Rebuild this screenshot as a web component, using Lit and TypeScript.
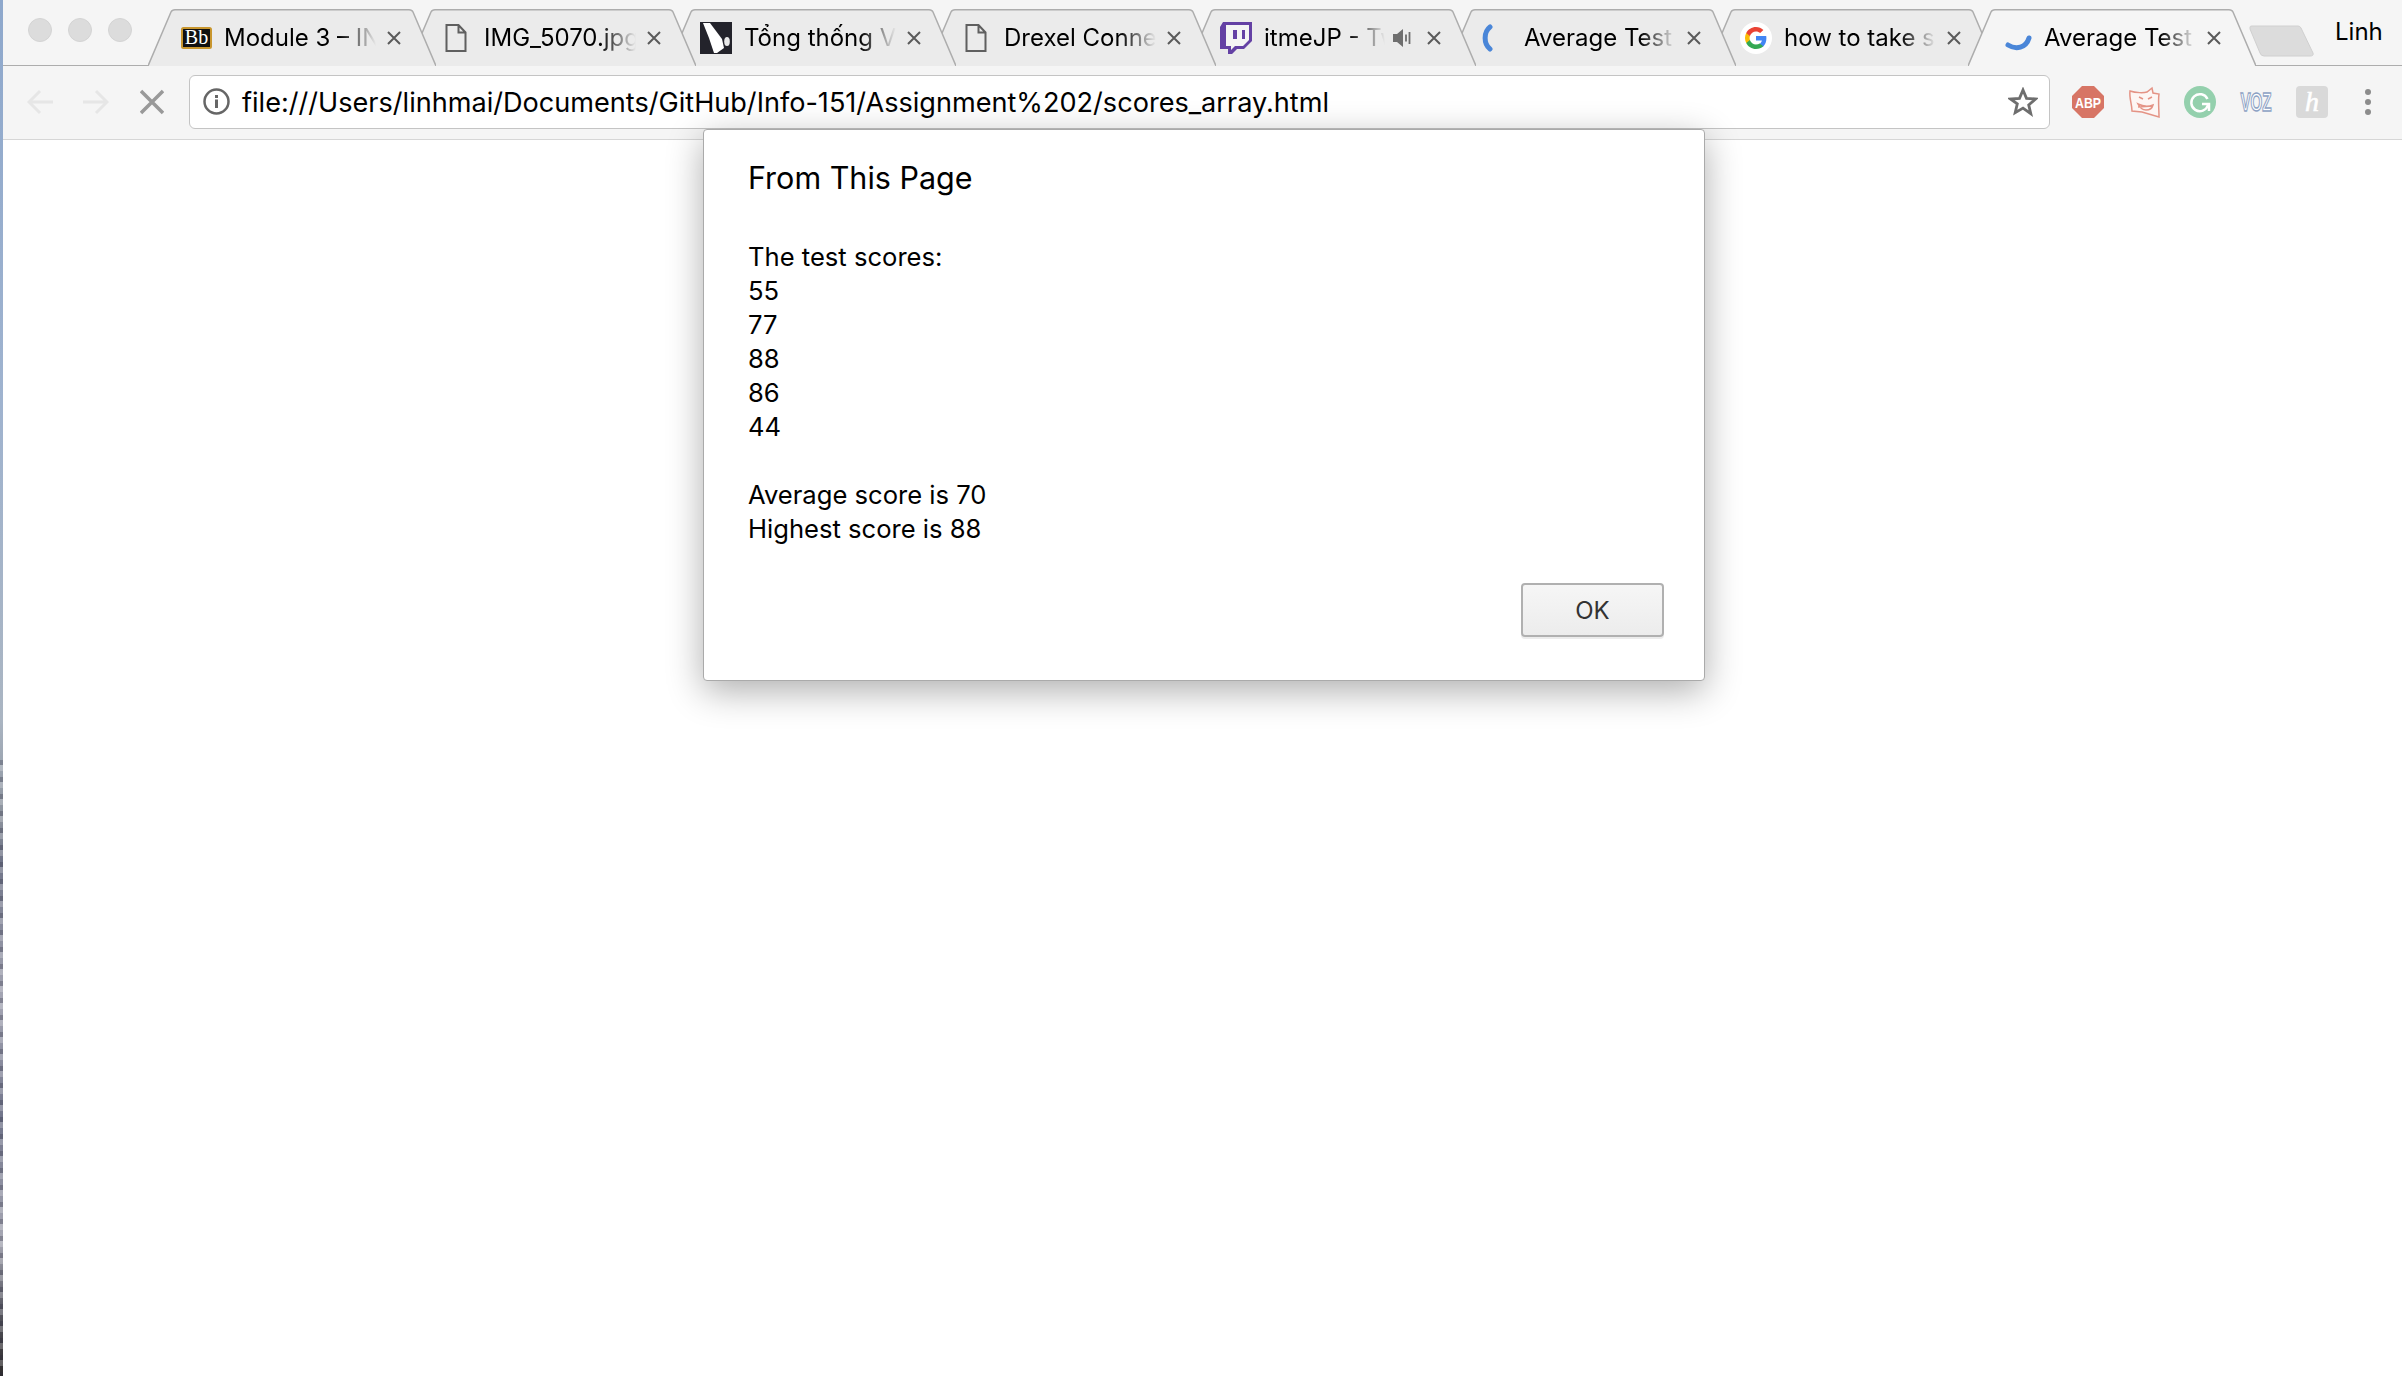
import { LitElement, html, css } from 'lit';
import { customElement } from 'lit/decorators.js';

type Tab = { title: string; icon: string; sound?: boolean; active?: boolean };

const TABS: Tab[] = [
  { title: 'Module 3 – INFO 151', icon: 'bb' },
  { title: 'IMG_5070.jpg', icon: 'file' },
  { title: 'Tổng thống Việt Nam', icon: 'wiki' },
  { title: 'Drexel Connect', icon: 'file' },
  { title: 'itmeJP - Twitch', icon: 'twitch', sound: true },
  { title: 'Average Test Score', icon: 'spin-left' },
  { title: 'how to take screenshot', icon: 'google' },
  { title: 'Average Test Score', icon: 'spin-bottom', active: true },
];

const LINES = ['The test scores:', '55', '77', '88', '86', '44', '', 'Average score is 70', 'Highest score is 88'];

function favicon(name: string) {
  switch (name) {
    case 'bb':
      return html`<svg width="31" height="22" viewBox="0 0 31 22">
        <rect x="1" y="1" width="29" height="20" rx="1.5" fill="#111" stroke="#c8962e" stroke-width="2" />
        <text x="15.5" y="17" text-anchor="middle" font-family="Liberation Serif, serif" font-size="20" fill="#fff">Bb</text>
      </svg>`;
    case 'file':
      return html`<svg width="22" height="28" viewBox="0 0 22 28" fill="none" stroke="#5f5f5f" stroke-width="2">
        <path d="M1.5 1h12l7 7.500V27h-19zM13.500 1v7.500h7" />
      </svg>`;
    case 'wiki':
      return html`<svg width="32" height="32" viewBox="0 0 32 32">
        <rect width="32" height="32" fill="#23232b" />
        <path d="M3 1h7l12 16 2 9-7 5h-3L9 16z" fill="#fff" />
        <ellipse cx="27" cy="19.500" rx="2.800" ry="4.500" fill="#e8e8e8" />
      </svg>`;
    case 'twitch':
      return html`<svg width="32" height="32" viewBox="0 0 32 32">
        <path d="M3 0h29v19l-8 8h-7l-5 5H8v-5H0V5z" fill="#6441a4" />
        <path d="M6 3h23v15l-6 6h-8l-4 4v-4H6z" fill="#f4f4f4" />
        <path d="M13 8h4v9h-4zM22 8h3v9h-3z" fill="#6441a4" />
      </svg>`;
    case 'spin-left':
      return html`<svg width="32" height="28" viewBox="0 0 32 28" fill="none">
        <path d="M10 3C3.500 8 3.500 20 10 25" stroke="#4a86d8" stroke-width="5" stroke-linecap="round" />
      </svg>`;
    case 'google':
      return html`<svg width="32" height="32" viewBox="0 0 32 32">
        <circle cx="16" cy="16" r="16" fill="#fff" />
        <path d="M26.400 16.300c0-.8-.1-1.600-.2-2.300H16v4.400h5.900c-.3 1.400-1 2.500-2.200 3.300v2.800h3.600c2-1.900 3.100-4.700 3.100-8.200z" fill="#4285f4" />
        <path d="M16 27c3 0 5.400-1 7.300-2.700l-3.600-2.800c-1 .7-2.200 1.100-3.700 1.100-2.800 0-5.200-1.900-6.100-4.500H6.200v2.900C8 24.600 11.700 27 16 27z" fill="#34a853" />
        <path d="M9.900 18.100c-.5-1.400-.5-2.800 0-4.200V11H6.200c-1.600 3.100-1.600 6.900 0 10z" fill="#fbbc05" />
        <path d="M16 9.400c1.600 0 3.100.6 4.200 1.700l3.200-3.200C21.400 6.100 18.900 5 16 5 11.700 5 8 7.400 6.200 11l3.700 2.900c.9-2.600 3.300-4.500 6.100-4.500z" fill="#ea4335" />
      </svg>`;
    default:
      return html`<svg width="32" height="28" viewBox="0 0 32 28" fill="none">
        <path d="M8 21c8 5 18 3 21-7" stroke="#4a86d8" stroke-width="5" stroke-linecap="round" />
      </svg>`;
  }
}

@customElement('app-root')
export class AppRoot extends LitElement {
  static styles = css`
    :host {
      display: flex;
      position: relative;
      height: 100vh;
      background: #fff;
      overflow: hidden;
      font-family: Inter, 'Liberation Sans', sans-serif;
      color: #000;
    }

    .edge {
      width: 3px;
      flex: none;
      background:
        repeating-linear-gradient(rgba(40, 40, 60, 0.28) 0 5px, rgba(255, 255, 255, 0.22) 5px 11px, transparent 11px 17px) 0 760px / 100% 616px no-repeat,
        linear-gradient(#8ea8cc 0, #9fb3cf 400px, #aab5c2 720px, #8b919c 820px, #6f7488 860px, #a5a6b4 1000px, #70748a 1120px, #a8a9b5 1240px, #565660 1310px, #2f2c2c 1376px);
    }

    .main {
      flex: 1;
      min-width: 0;
    }

    .strip {
      display: flex;
      position: relative;
      box-sizing: border-box;
      height: 66px;
      padding-left: 145px;
      background: #f5f5f5;
      border-bottom: 1px solid #adadad;
    }

    .lights {
      position: absolute;
      top: 18px;
      left: 25px;
      display: flex;
      gap: 16px;
    }

    .lights span {
      box-sizing: border-box;
      width: 24px;
      height: 24px;
      border-radius: 50%;
      background: #dcdcdc;
      border: 1px solid #d4d4d4;
    }

    .tab {
      position: relative;
      flex: none;
      display: flex;
      align-items: center;
      box-sizing: border-box;
      width: 288px;
      height: 57px;
      margin-top: 9px;
      margin-right: -28px;
      padding: 0 34px 0 32px;
    }

    .tab-shape {
      position: absolute;
      top: 0;
      left: 0;
    }

    .tab-shape path {
      fill: #ebebeb;
      stroke: #adadad;
      stroke-width: 1.5;
    }

    .tab.active .tab-shape path {
      fill: #f5f5f5;
    }

    .favicon {
      position: relative;
      flex: none;
      display: flex;
      justify-content: center;
      align-items: center;
      width: 32px;
      height: 32px;
      margin-right: 12px;
    }

    .title {
      position: relative;
      flex: 1;
      min-width: 0;
      overflow: hidden;
      white-space: nowrap;
      font-size: 24px;
      line-height: 32px;
      -webkit-mask-image: linear-gradient(to right, #000 calc(100% - 36px), transparent);
      mask-image: linear-gradient(to right, #000 calc(100% - 36px), transparent);
    }

    .sound {
      position: relative;
      flex: none;
      margin-left: 8px;
      margin-right: 5px;
    }

    .close {
      position: relative;
      flex: none;
      margin-left: 10px;
    }

    .newtab {
      position: relative;
      flex: none;
      margin: 25px 0 0 20px;
    }

    .who {
      position: absolute;
      top: 16px;
      left: 2332px;
      font-size: 24px;
      line-height: 32px;
    }

    .toolbar {
      display: flex;
      align-items: center;
      box-sizing: border-box;
      height: 74px;
      padding: 0 0 2px 24px;
      background: #f5f5f5;
      border-bottom: 1px solid #d6d6d6;
    }

    .nav {
      flex: none;
      display: flex;
      gap: 30px;
      margin-right: 25px;
    }

    .nav svg {
      display: block;
    }

    .nav .stop {
      margin-left: 1px;
    }

    .omnibox {
      flex: none;
      display: flex;
      align-items: center;
      box-sizing: border-box;
      width: 1861px;
      height: 54px;
      padding: 0 11px 0 13px;
      background: #fff;
      border: 1px solid #c4c4c4;
      border-radius: 6px;
    }

    .url {
      flex: 1;
      margin: 2px 0 0 12px;
      font-size: 27.1px;
      line-height: 36px;
      white-space: nowrap;
    }

    .exts {
      flex: none;
      display: flex;
      align-items: center;
      gap: 24px;
      margin-left: 22px;
    }

    .exts svg {
      display: block;
      overflow: visible;
    }

    .exts .menu {
      margin-left: 12px;
    }

    .dialog {
      position: absolute;
      top: 129px;
      left: 703px;
      box-sizing: border-box;
      width: 1002px;
      height: 552px;
      padding: 0 40px 0 44px;
      background: #fff;
      border: 1px solid #aaa;
      border-radius: 4px;
      box-shadow: 0 10px 36px rgba(0, 0, 0, 0.32);
    }

    .dialog h1 {
      margin: 28px 0 0;
      font-size: 30.5px;
      font-weight: 400;
      line-height: 40px;
    }

    .message {
      margin-top: 42px;
      font-size: 25.6px;
      line-height: 34px;
    }

    .message div {
      min-height: 34px;
    }

    .actions {
      display: flex;
      justify-content: flex-end;
      margin-top: 37px;
    }

    button {
      box-sizing: border-box;
      width: 143px;
      height: 54px;
      padding: 0;
      font: 24px Inter, 'Liberation Sans', sans-serif;
      color: #333;
      background: linear-gradient(#f6f6f6, #ececec);
      border: 2px solid #b0b0b0;
      border-radius: 4px;
      box-shadow: 0 2px 0 #ececec;
    }
  `;

  private renderTab(tab: Tab, i: number) {
    const z = tab.active ? 20 : TABS.length - i;
    return html`<div class="tab ${tab.active ? 'active' : ''}" style="z-index:${z}">
      <svg class="tab-shape" width="288" height="57" viewBox="0 0 288 57">
        <path d="M0 57L23 3Q24 .8 27 .8H261Q264 .8 265 3L288 57" />
      </svg>
      <span class="favicon">${favicon(tab.icon)}</span>
      <span class="title">${tab.title}</span>
      ${tab.sound
        ? html`<svg class="sound" width="18" height="18" viewBox="0 0 18 18">
            <path d="M0 5h4l6-5v18l-6-5H0z" fill="#6e6e6e" />
            <path d="M13 5.500v7M16.500 3v12" stroke="#6e6e6e" stroke-width="1.800" />
          </svg>`
        : ''}
      <svg class="close" width="16" height="16" viewBox="0 0 16 16">
        <path d="M2 2l12 12M14 2L2 14" stroke="#5a5a5a" stroke-width="2" />
      </svg>
    </div>`;
  }

  private renderExtensions() {
    return html`<div class="exts">
      <svg width="32" height="32" viewBox="0 0 32 32">
        <path d="M10 0h12l10 10v12L22 32H10L0 22V10z" fill="#d77565" />
        <text x="16" y="21.500" text-anchor="middle" font-family="Liberation Sans, sans-serif" font-size="15" font-weight="700" textLength="26" lengthAdjust="spacingAndGlyphs" fill="#fff">ABP</text>
      </svg>
      <svg width="32" height="32" viewBox="0 0 32 32" fill="none" stroke="#e49385" stroke-width="1.500">
        <path d="M2 5c6 2 14 2 17 1l5-4 1 5 6 1c-1 7 0 15 0 23L14 26 4 25C4 18 1 12 2 5z" fill="#fdf6f4" />
        <path d="M10 18c4 2 10 3 15 1-1 4-4 5-7 5s-6-2-8-6zM10 21l15-1" />
        <path d="M11 11l4 2M24 11l-4 2" />
      </svg>
      <svg width="32" height="32" viewBox="0 0 32 32">
        <circle cx="16" cy="16" r="16" fill="#94d0ad" />
        <path d="M23.500 13A8.500 8.500 0 1 0 24 19" fill="none" stroke="#fff" stroke-width="2.500" />
        <path d="M18 18h7v7" fill="none" stroke="#fff" stroke-width="2.500" />
      </svg>
      <svg width="32" height="20" viewBox="0 0 32 20">
        <text x="16" y="19" text-anchor="middle" font-family="Liberation Sans, sans-serif" font-size="26" font-weight="700" textLength="31" lengthAdjust="spacingAndGlyphs" fill="#fff" stroke="#8da2c4" stroke-width="1.500">VOZ</text>
      </svg>
      <svg width="32" height="32" viewBox="0 0 32 32">
        <rect width="32" height="32" rx="4" fill="#d9d9d9" />
        <text x="16" y="25" text-anchor="middle" font-family="Liberation Serif, serif" font-style="italic" font-size="28" fill="#fff" stroke="#fff" stroke-width="0.600">h</text>
      </svg>
      <svg class="menu" width="8" height="28" viewBox="0 0 8 28" fill="#8c8c8c">
        <circle cx="4" cy="4" r="3" />
        <circle cx="4" cy="14" r="3" />
        <circle cx="4" cy="24" r="3" />
      </svg>
    </div>`;
  }

  render() {
    return html`
      <div class="edge"></div>
      <div class="main">
        <div class="strip">
          <div class="lights"><span></span><span></span><span></span></div>
          ${TABS.map((t, i) => this.renderTab(t, i))}
          <svg class="newtab" width="66" height="32" viewBox="0 0 66 32">
            <path d="M2 2Q2 1 4 1H50Q52 1 53 3L65 28Q66 31 62 31H16Q13 31 12 28L2 4z" fill="#dcdcdc" stroke="#d0d0d0" />
          </svg>
          <div class="who">Linh</div>
        </div>
        <div class="toolbar">
          <div class="nav">
            <svg width="26" height="26" viewBox="0 0 26 26" fill="none" stroke="#e6e6e6" stroke-width="3">
              <path d="M26 13H2M13 2L2 13l11 11" />
            </svg>
            <svg width="26" height="26" viewBox="0 0 26 26" fill="none" stroke="#e6e6e6" stroke-width="3">
              <path d="M0 13h24M13 2l11 11-11 11" />
            </svg>
            <svg class="stop" width="24" height="26" viewBox="0 0 24 26">
              <path d="M1 2l22 22M23 2L1 24" stroke="#999" stroke-width="3.500" />
            </svg>
          </div>
          <div class="omnibox">
            <svg width="27" height="27" viewBox="0 0 27 27">
              <circle cx="13.500" cy="13.500" r="12" fill="none" stroke="#666" stroke-width="2.500" />
              <path d="M12 11.500h3V20h-3zM12 7h3v3h-3z" fill="#666" />
            </svg>
            <span class="url">file:///Users/linhmai/Documents/GitHub/Info-151/Assignment%202/scores_array.html</span>
            <svg width="30" height="30" viewBox="0 0 30 30">
              <path d="M15 3l3.500 8.300 9 .7-6.800 5.900 2.100 8.800L15 21.100l-7.800 4.600 2.100-8.800L2.500 12l9-.7z" fill="none" stroke="#6e6e6e" stroke-width="2.800" />
            </svg>
          </div>
          ${this.renderExtensions()}
        </div>
      </div>
      <div class="dialog">
        <h1>From This Page</h1>
        <div class="message">${LINES.map((l) => html`<div>${l}</div>`)}</div>
        <div class="actions"><button>OK</button></div>
      </div>
    `;
  }
}
